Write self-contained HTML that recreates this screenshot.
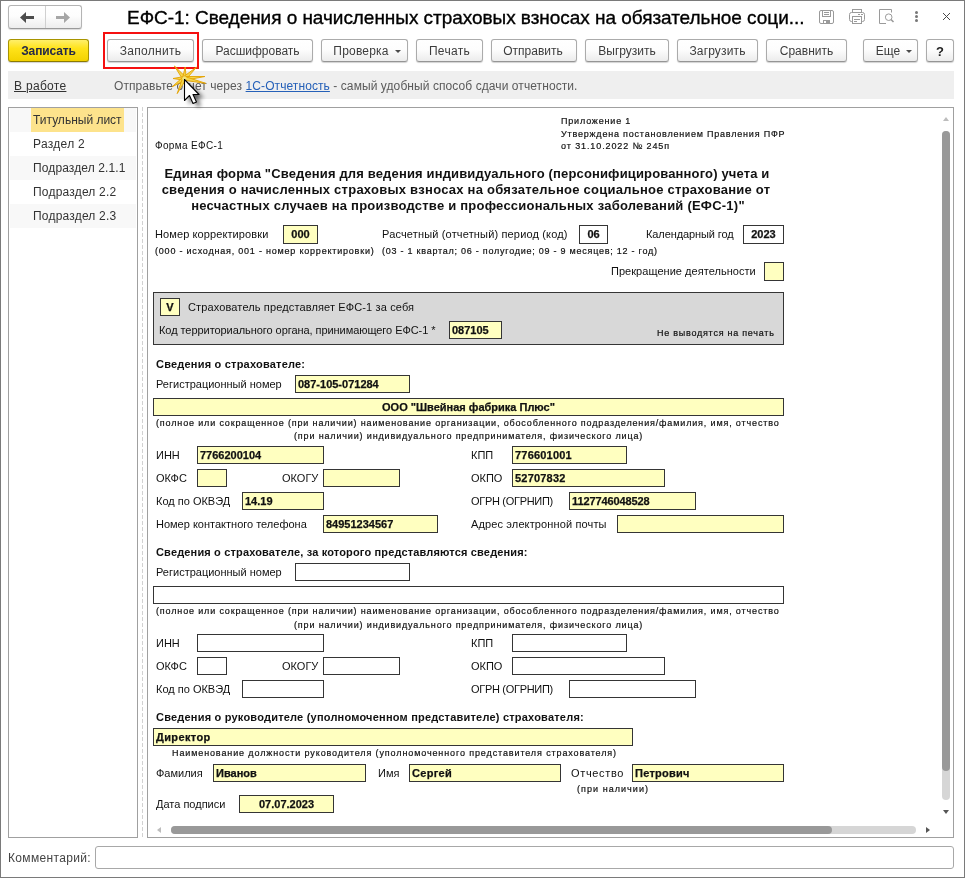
<!DOCTYPE html>
<html><head><meta charset="utf-8">
<style>
*{box-sizing:border-box;margin:0;padding:0}
html,body{width:965px;height:878px;overflow:hidden;background:#fff}
body{font-family:"Liberation Sans",sans-serif;position:relative;color:#333}
.a{position:absolute;white-space:pre;line-height:normal}
.win{position:absolute;left:0;top:0;width:965px;height:878px;border:1px solid #7a7a7a;border-right:1px solid #7a7a7a}
.btn{position:absolute;top:39px;height:23px;border:1px solid #ababab;border-bottom-color:#959595;border-radius:3px;background:linear-gradient(#fff 0,#fdfdfd 45%,#ececec 100%);box-shadow:0 1px 1px rgba(0,0,0,.18);font-size:12px;color:#3c3c3c;text-align:center;line-height:21px;padding-top:1px}
.tri{display:inline-block;width:0;height:0;border-left:3px solid transparent;border-right:3px solid transparent;border-top:3px solid #4a4a4a;vertical-align:2px;margin-left:6px}
.row{position:absolute;left:10px;width:126px;height:24px}
.row span{position:absolute;left:23px;top:5px;font-size:12px;color:#333;white-space:pre}
.doc{position:absolute;left:147px;top:107px;width:807px;height:731px;border:1px solid #a0a0a0;overflow:hidden;background:#fff}
.t11{font-size:11px;color:#222}
.b11{font-size:11px;font-weight:bold;color:#222}
.s9{font-size:9px;letter-spacing:.7px;color:#222}
.box{position:absolute;border:1px solid #333;background:#ffffc0;font-size:11px;font-weight:bold;color:#222;white-space:pre;padding-left:2px;line-height:15px}
.wbox{background:#fff}
</style></head><body><div id="wrap" style="will-change:transform;position:absolute;left:0;top:0;width:965px;height:878px;overflow:hidden">
<div class="win"></div>

<!-- nav buttons -->
<div style="position:absolute;left:8px;top:5px;width:74px;height:24px;border:1px solid #b4b4b4;border-bottom-color:#999;border-radius:3px;background:linear-gradient(#fff 0,#fdfdfd 45%,#ededed 100%);box-shadow:0 1px 1px rgba(0,0,0,.15)"></div>
<div style="position:absolute;left:45px;top:6px;width:1px;height:22px;background:#d0d0d0"></div>
<svg style="position:absolute;left:19px;top:11px" width="16" height="13" viewBox="0 0 16 13"><path d="M1 6.5 L7 1 L7 5 L15 5 L15 8 L7 8 L7 12 Z" fill="#4d4d4d"/></svg>
<svg style="position:absolute;left:55px;top:11px" width="16" height="13" viewBox="0 0 16 13"><path d="M15 6.5 L9 1 L9 5 L1 5 L1 8 L9 8 L9 12 Z" fill="#a6a6a6"/></svg>

<div class="a" style="left:127px;top:7px;font-size:19px;letter-spacing:-.045px;color:#000;-webkit-text-stroke:.35px #000">ЕФС-1: Сведения о начисленных страховых взносах на обязательное соци...</div>

<!-- title icons -->
<svg style="position:absolute;left:819px;top:10px" width="15" height="14" viewBox="0 0 15 14" fill="none" stroke="#9a9a9a" stroke-width="1"><rect x="0.5" y="0.5" width="14" height="13" rx="1.5"/><rect x="3.5" y="0.5" width="8" height="6"/><path d="M5 2.5 H10 M5 4.5 H10"/><rect x="4.5" y="10.5" width="6" height="3"/><rect x="7" y="11" width="3" height="2" fill="#9a9a9a" stroke="none"/></svg>
<svg style="position:absolute;left:849px;top:9px" width="16" height="15" viewBox="0 0 16 15" fill="none" stroke="#9a9a9a" stroke-width="1"><rect x="3.5" y="0.5" width="9" height="3"/><rect x="0.5" y="3.5" width="15" height="9" rx="2"/><rect x="3.5" y="7.5" width="9" height="7" fill="#fff"/><path d="M5 10.5 H11 M5 12.5 H8 M9 5.5 H11 M12 5.5 H14"/></svg>
<svg style="position:absolute;left:879px;top:9px" width="16" height="15" viewBox="0 0 16 15" fill="none" stroke="#9a9a9a" stroke-width="1"><path d="M7 14.5 H0.5 V0.5 H12.5 V3.5"/><circle cx="9.7" cy="8.2" r="3.3"/><path d="M12 10.5 L14.5 13" stroke-width="1.6"/></svg>
<div style="position:absolute;left:915px;top:11px;width:3px;height:3px;border-radius:50%;background:#777"></div>
<div style="position:absolute;left:915px;top:15px;width:3px;height:3px;border-radius:50%;background:#777"></div>
<div style="position:absolute;left:915px;top:19px;width:3px;height:3px;border-radius:50%;background:#777"></div>
<svg style="position:absolute;left:942px;top:12px" width="9" height="9" viewBox="0 0 9 9"><path d="M1 1 L8 8 M8 1 L1 8" stroke="#4a4a4a" stroke-width="1"/></svg>

<!-- toolbar -->
<div class="btn" style="left:8px;width:81px;border-color:#a89400;border-bottom-color:#8c7a00;background:linear-gradient(#ffef6a 0,#ffe31a 40%,#f3d200 100%);font-weight:bold;font-size:12px;letter-spacing:-.12px;color:#262a48">Записать</div>
<div class="btn" style="left:107px;width:87px;letter-spacing:.3px">Заполнить</div>
<div class="btn" style="left:202px;width:111px">Расшифровать</div>
<div class="btn" style="left:321px;width:87px;padding-left:5px;letter-spacing:.2px">Проверка<span class="tri"></span></div>
<div class="btn" style="left:416px;width:67px;letter-spacing:.3px">Печать</div>
<div class="btn" style="left:491px;width:86px;padding-right:2px">Отправить</div>
<div class="btn" style="left:585px;width:84px">Выгрузить</div>
<div class="btn" style="left:677px;width:81px;letter-spacing:.15px">Загрузить</div>
<div class="btn" style="left:766px;width:81px">Сравнить</div>
<div class="btn" style="left:863px;width:55px;padding-left:7px">Еще<span class="tri"></span></div>
<div class="btn" style="left:926px;width:28px;font-weight:bold;font-size:13px;color:#222">?</div>
<div style="position:absolute;left:103px;top:32px;width:96px;height:37px;border:2px solid #f51010"></div>

<!-- info bar -->
<div style="position:absolute;left:8px;top:71px;width:946px;height:28px;background:#efefef"></div>
<div class="a" style="left:14px;top:79px;font-size:12px;letter-spacing:.3px;color:#333;text-decoration:underline">В работе</div>
<div class="a" style="left:114px;top:79px;font-size:12px;letter-spacing:.08px;color:#5a5a5a">Отправьте отчет через <span style="color:#2560b8;text-decoration:underline">1С-Отчетность</span> - самый удобный способ сдачи отчетности.</div>

<!-- left panel -->
<div style="position:absolute;left:8px;top:107px;width:130px;height:731px;border:1px solid #a0a0a0;background:#fff"></div>
<div class="row" style="top:108px;background:#f8f8f8"><div style="position:absolute;left:21px;top:0;width:93px;height:24px;background:#fde38c"></div><span>Титульный лист</span></div>
<div class="row" style="top:132px"><span style="letter-spacing:.3px">Раздел 2</span></div>
<div class="row" style="top:156px;background:#f8f8f8"><span style="letter-spacing:.12px">Подраздел 2.1.1</span></div>
<div class="row" style="top:180px"><span style="letter-spacing:.2px">Подраздел 2.2</span></div>
<div class="row" style="top:204px;background:#f8f8f8"><span style="letter-spacing:.2px">Подраздел 2.3</span></div>

<!-- splitter -->
<div style="position:absolute;left:142px;top:107px;width:1px;height:731px;background:repeating-linear-gradient(#d2d2d2 0 4px,transparent 4px 6px)"></div>

<!-- document -->
<div class="a" style="left:561px;top:116px;font-size:9px;letter-spacing:0.82px;color:#111;-webkit-text-stroke:.2px #111">Приложение 1</div>
<div class="a" style="left:561px;top:129px;font-size:9px;letter-spacing:0.8px;color:#111;-webkit-text-stroke:.2px #111">Утверждена постановлением Правления ПФР</div>
<div class="a" style="left:561px;top:141px;font-size:9px;letter-spacing:0.9px;color:#111;-webkit-text-stroke:.2px #111">от 31.10.2022 № 245п</div>
<div class="a" style="left:155px;top:140px;font-size:10px;letter-spacing:0.35px;color:#111;">Форма ЕФС-1</div>
<div class="a" style="left:67px;width:800px;text-align:center;top:166px;font-size:13px;font-weight:bold;letter-spacing:0.15px;color:#111;">Единая форма "Сведения для ведения индивидуального (персонифицированного) учета и</div>
<div class="a" style="left:66px;width:800px;text-align:center;top:182px;font-size:13px;font-weight:bold;letter-spacing:0.245px;color:#111;">сведения о начисленных страховых взносах на обязательное социальное страхование от</div>
<div class="a" style="left:68px;width:800px;text-align:center;top:198px;font-size:13px;font-weight:bold;letter-spacing:0.23px;color:#111;">несчастных случаев на производстве и профессиональных заболеваний (ЕФС-1)"</div>
<div class="a" style="left:155px;top:228px;font-size:11px;letter-spacing:0.1px;color:#111;">Номер корректировки</div>
<div style="position:absolute;left:283px;top:225px;width:35px;height:19px;border:1px solid #353535;background:#ffffc0"></div>
<div class="a" style="left:-99.5px;width:800px;text-align:center;top:228px;font-size:11px;font-weight:bold;color:#111;-webkit-text-stroke:.25px #111">000</div>
<div class="a" style="left:155px;top:246px;font-size:9px;letter-spacing:0.79px;color:#111;-webkit-text-stroke:.2px #111">(000 - исходная, 001 - номер корректировки)</div>
<div class="a" style="left:382px;top:228px;font-size:11px;letter-spacing:0.16px;color:#111;">Расчетный (отчетный) период (код)</div>
<div style="position:absolute;left:579px;top:225px;width:29px;height:19px;border:1px solid #353535;background:#fff"></div>
<div class="a" style="left:193.5px;width:800px;text-align:center;top:228px;font-size:11px;font-weight:bold;color:#111;-webkit-text-stroke:.25px #111">06</div>
<div class="a" style="left:382px;top:246px;font-size:9px;letter-spacing:0.755px;color:#111;-webkit-text-stroke:.2px #111">(03 - 1 квартал; 06 - полугодие; 09 - 9 месяцев; 12 - год)</div>
<div class="a" style="left:646px;top:228px;font-size:11px;letter-spacing:-0.1px;color:#111;">Календарный год</div>
<div style="position:absolute;left:743px;top:225px;width:41px;height:19px;border:1px solid #353535;background:#fff"></div>
<div class="a" style="left:363.5px;width:800px;text-align:center;top:228px;font-size:11px;font-weight:bold;color:#111;-webkit-text-stroke:.25px #111">2023</div>
<div class="a" style="left:611px;top:265px;font-size:11px;letter-spacing:0.04px;color:#111;">Прекращение деятельности</div>
<div style="position:absolute;left:764px;top:262px;width:20px;height:19px;border:1px solid #353535;background:#ffffc0"></div>
<div style="position:absolute;left:153px;top:292px;width:631px;height:53px;border:1px solid #353535;background:#d8d8d8"></div>
<div style="position:absolute;left:160px;top:298px;width:20px;height:18px;border:1px solid #353535;background:#ffffc0"></div>
<div class="a" style="left:-230.0px;width:800px;text-align:center;top:301px;font-size:11px;font-weight:bold;color:#111;-webkit-text-stroke:.25px #111">V</div>
<div class="a" style="left:188px;top:301px;font-size:11px;letter-spacing:0.13px;color:#111;">Страхователь представляет ЕФС-1 за себя</div>
<div class="a" style="left:159px;top:324px;font-size:11px;letter-spacing:-0.06px;color:#111;">Код территориального органа, принимающего ЕФС-1 *</div>
<div style="position:absolute;left:449px;top:321px;width:53px;height:18px;border:1px solid #353535;background:#ffffc0"></div>
<div class="a" style="left:452px;top:324px;font-size:11px;font-weight:bold;color:#111;-webkit-text-stroke:.25px #111">087105</div>
<div class="a" style="left:657px;top:328px;font-size:9px;letter-spacing:0.75px;color:#111;-webkit-text-stroke:.2px #111">Не выводятся на печать</div>
<div class="a" style="left:156px;top:358px;font-size:11px;font-weight:bold;letter-spacing:0.21px;color:#111;">Сведения о страхователе:</div>
<div class="a" style="left:156px;top:378px;font-size:11px;color:#111;">Регистрационный номер</div>
<div style="position:absolute;left:295px;top:375px;width:115px;height:18px;border:1px solid #353535;background:#ffffc0"></div>
<div class="a" style="left:298px;top:378px;font-size:11px;font-weight:bold;color:#111;-webkit-text-stroke:.25px #111">087-105-071284</div>
<div style="position:absolute;left:153px;top:398px;width:631px;height:18px;border:1px solid #353535;background:#ffffc0"></div>
<div class="a" style="left:68.5px;width:800px;text-align:center;top:401px;font-size:11px;font-weight:bold;color:#111;-webkit-text-stroke:.25px #111">ООО "Швейная фабрика Плюс"</div>
<div class="a" style="left:156px;top:418px;font-size:9px;letter-spacing:0.85px;color:#111;-webkit-text-stroke:.2px #111">(полное или сокращенное (при наличии) наименование организации, обособленного подразделения/фамилия, имя, отчество</div>
<div class="a" style="left:294px;top:431px;font-size:9px;letter-spacing:0.85px;color:#111;-webkit-text-stroke:.2px #111">(при наличии) индивидуального предпринимателя, физического лица)</div>
<div class="a" style="left:156px;top:449px;font-size:11px;color:#111;">ИНН</div>
<div style="position:absolute;left:197px;top:446px;width:127px;height:18px;border:1px solid #353535;background:#ffffc0"></div>
<div class="a" style="left:200px;top:449px;font-size:11px;font-weight:bold;color:#111;-webkit-text-stroke:.25px #111">7766200104</div>
<div class="a" style="left:471px;top:449px;font-size:11px;color:#111;">КПП</div>
<div style="position:absolute;left:512px;top:446px;width:115px;height:18px;border:1px solid #353535;background:#ffffc0"></div>
<div class="a" style="left:515px;top:449px;font-size:11px;font-weight:bold;letter-spacing:0.2px;color:#111;-webkit-text-stroke:.25px #111">776601001</div>
<div class="a" style="left:156px;top:472px;font-size:11px;color:#111;">ОКФС</div>
<div style="position:absolute;left:197px;top:469px;width:30px;height:18px;border:1px solid #353535;background:#ffffc0"></div>
<div class="a" style="left:282px;top:472px;font-size:11px;color:#111;">ОКОГУ</div>
<div style="position:absolute;left:323px;top:469px;width:77px;height:18px;border:1px solid #353535;background:#ffffc0"></div>
<div class="a" style="left:471px;top:472px;font-size:11px;color:#111;">ОКПО</div>
<div style="position:absolute;left:512px;top:469px;width:153px;height:18px;border:1px solid #353535;background:#ffffc0"></div>
<div class="a" style="left:515px;top:472px;font-size:11px;font-weight:bold;letter-spacing:0.2px;color:#111;-webkit-text-stroke:.25px #111">52707832</div>
<div class="a" style="left:156px;top:495px;font-size:11px;color:#111;">Код по ОКВЭД</div>
<div style="position:absolute;left:242px;top:492px;width:82px;height:18px;border:1px solid #353535;background:#ffffc0"></div>
<div class="a" style="left:245px;top:495px;font-size:11px;font-weight:bold;color:#111;-webkit-text-stroke:.25px #111">14.19</div>
<div class="a" style="left:471px;top:495px;font-size:11px;letter-spacing:-0.3px;color:#111;">ОГРН (ОГРНИП)</div>
<div style="position:absolute;left:569px;top:492px;width:127px;height:18px;border:1px solid #353535;background:#ffffc0"></div>
<div class="a" style="left:572px;top:495px;font-size:11px;font-weight:bold;letter-spacing:-0.1px;color:#111;-webkit-text-stroke:.25px #111">1127746048528</div>
<div class="a" style="left:156px;top:518px;font-size:11px;color:#111;">Номер контактного телефона</div>
<div style="position:absolute;left:323px;top:515px;width:115px;height:18px;border:1px solid #353535;background:#ffffc0"></div>
<div class="a" style="left:326px;top:518px;font-size:11px;font-weight:bold;color:#111;-webkit-text-stroke:.25px #111">84951234567</div>
<div class="a" style="left:471px;top:518px;font-size:11px;letter-spacing:0.13px;color:#111;">Адрес электронной почты</div>
<div style="position:absolute;left:617px;top:515px;width:167px;height:18px;border:1px solid #353535;background:#ffffc0"></div>
<div class="a" style="left:156px;top:546px;font-size:11px;font-weight:bold;letter-spacing:0.16px;color:#111;">Сведения о страхователе, за которого представляются сведения:</div>
<div class="a" style="left:156px;top:566px;font-size:11px;color:#111;">Регистрационный номер</div>
<div style="position:absolute;left:295px;top:563px;width:115px;height:18px;border:1px solid #353535;background:#fff"></div>
<div style="position:absolute;left:153px;top:586px;width:631px;height:18px;border:1px solid #353535;background:#fff"></div>
<div class="a" style="left:156px;top:606px;font-size:9px;letter-spacing:0.85px;color:#111;-webkit-text-stroke:.2px #111">(полное или сокращенное (при наличии) наименование организации, обособленного подразделения/фамилия, имя, отчество</div>
<div class="a" style="left:294px;top:620px;font-size:9px;letter-spacing:0.85px;color:#111;-webkit-text-stroke:.2px #111">(при наличии) индивидуального предпринимателя, физического лица)</div>
<div class="a" style="left:156px;top:637px;font-size:11px;color:#111;">ИНН</div>
<div style="position:absolute;left:197px;top:634px;width:127px;height:18px;border:1px solid #353535;background:#fff"></div>
<div class="a" style="left:471px;top:637px;font-size:11px;color:#111;">КПП</div>
<div style="position:absolute;left:512px;top:634px;width:115px;height:18px;border:1px solid #353535;background:#fff"></div>
<div class="a" style="left:156px;top:660px;font-size:11px;color:#111;">ОКФС</div>
<div style="position:absolute;left:197px;top:657px;width:30px;height:18px;border:1px solid #353535;background:#fff"></div>
<div class="a" style="left:282px;top:660px;font-size:11px;color:#111;">ОКОГУ</div>
<div style="position:absolute;left:323px;top:657px;width:77px;height:18px;border:1px solid #353535;background:#fff"></div>
<div class="a" style="left:471px;top:660px;font-size:11px;color:#111;">ОКПО</div>
<div style="position:absolute;left:512px;top:657px;width:153px;height:18px;border:1px solid #353535;background:#fff"></div>
<div class="a" style="left:156px;top:683px;font-size:11px;color:#111;">Код по ОКВЭД</div>
<div style="position:absolute;left:242px;top:680px;width:82px;height:18px;border:1px solid #353535;background:#fff"></div>
<div class="a" style="left:471px;top:683px;font-size:11px;letter-spacing:-0.3px;color:#111;">ОГРН (ОГРНИП)</div>
<div style="position:absolute;left:569px;top:680px;width:127px;height:18px;border:1px solid #353535;background:#fff"></div>
<div class="a" style="left:156px;top:711px;font-size:11px;font-weight:bold;letter-spacing:0.21px;color:#111;">Сведения о руководителе (уполномоченном представителе) страхователя:</div>
<div style="position:absolute;left:153px;top:728px;width:480px;height:18px;border:1px solid #353535;background:#ffffc0"></div>
<div class="a" style="left:156px;top:731px;font-size:11px;font-weight:bold;letter-spacing:0.38px;color:#111;-webkit-text-stroke:.25px #111">Директор</div>
<div class="a" style="left:172px;top:748px;font-size:9px;letter-spacing:0.88px;color:#111;-webkit-text-stroke:.2px #111">Наименование должности руководителя (уполномоченного представителя страхователя)</div>
<div class="a" style="left:156px;top:767px;font-size:11px;color:#111;">Фамилия</div>
<div style="position:absolute;left:213px;top:764px;width:153px;height:18px;border:1px solid #353535;background:#ffffc0"></div>
<div class="a" style="left:216px;top:767px;font-size:11px;font-weight:bold;color:#111;-webkit-text-stroke:.25px #111">Иванов</div>
<div class="a" style="left:378px;top:767px;font-size:11px;color:#111;">Имя</div>
<div style="position:absolute;left:409px;top:764px;width:152px;height:18px;border:1px solid #353535;background:#ffffc0"></div>
<div class="a" style="left:412px;top:767px;font-size:11px;font-weight:bold;letter-spacing:0.3px;color:#111;-webkit-text-stroke:.25px #111">Сергей</div>
<div class="a" style="left:571px;top:767px;font-size:11px;letter-spacing:0.65px;color:#111;">Отчество</div>
<div style="position:absolute;left:632px;top:764px;width:152px;height:18px;border:1px solid #353535;background:#ffffc0"></div>
<div class="a" style="left:635px;top:767px;font-size:11px;font-weight:bold;letter-spacing:0.25px;color:#111;-webkit-text-stroke:.25px #111">Петрович</div>
<div class="a" style="left:577px;top:784px;font-size:9px;letter-spacing:1.05px;color:#111;-webkit-text-stroke:.2px #111">(при наличии)</div>
<div class="a" style="left:156px;top:798px;font-size:11px;color:#111;">Дата подписи</div>
<div style="position:absolute;left:239px;top:795px;width:95px;height:18px;border:1px solid #353535;background:#ffffc0"></div>
<div class="a" style="left:-113.5px;width:800px;text-align:center;top:798px;font-size:11px;font-weight:bold;color:#111;-webkit-text-stroke:.25px #111">07.07.2023</div>
<!-- document frame -->
<div style="position:absolute;left:147px;top:107px;width:807px;height:731px;border:1px solid #a0a0a0"></div>
<!-- v scroll -->
<svg style="position:absolute;left:942px;top:116px" width="8" height="6" viewBox="0 0 8 6"><path d="M1 5 L4 1 L7 5 Z" fill="#bdbdbd"/></svg>
<div style="position:absolute;left:942px;top:131px;width:8px;height:669px;border-radius:4px;background:#d6d6d6"></div>
<div style="position:absolute;left:942px;top:131px;width:8px;height:640px;border-radius:4px;background:#999"></div>
<svg style="position:absolute;left:942px;top:809px" width="8" height="6" viewBox="0 0 8 6"><path d="M1 1 L7 1 L4 5 Z" fill="#555"/></svg>
<!-- h scroll -->
<svg style="position:absolute;left:156px;top:826px" width="6" height="8" viewBox="0 0 6 8"><path d="M5 1 L5 7 L1 4 Z" fill="#bdbdbd"/></svg>
<div style="position:absolute;left:171px;top:826px;width:745px;height:8px;border-radius:4px;background:#d6d6d6"></div>
<div style="position:absolute;left:171px;top:826px;width:661px;height:8px;border-radius:4px;background:#999"></div>
<svg style="position:absolute;left:925px;top:826px" width="6" height="8" viewBox="0 0 6 8"><path d="M1 1 L5 4 L1 7 Z" fill="#555"/></svg>
<!-- comment -->
<div class="a" style="left:8px;top:851px;font-size:12px;letter-spacing:.33px;color:#444">Комментарий:</div>
<div style="position:absolute;left:95px;top:846px;width:859px;height:23px;border:1px solid #a8a8a8;border-radius:3px;background:#fff"></div>


<!-- cursor sparkle -->
<svg style="position:absolute;left:165px;top:60px" width="50" height="50" viewBox="0 0 50 50">
<defs><filter id="bl" x="-50%" y="-50%" width="200%" height="200%"><feGaussianBlur stdDeviation="2.2"/></filter></defs>
<g fill="#f5d64a" stroke="#e3a200" stroke-width="0.9" stroke-linejoin="round">
<polygon points="20.9,17.2 9.4,6.0 17.9,19.6"/>
<polygon points="21.3,18.5 20.2,7.1 17.5,18.3"/>
<polygon points="20.7,19.8 31.6,7.1 18.1,17.0"/>
<polygon points="19.6,20.3 39.9,16.5 19.2,16.5"/>
<polygon points="19.0,20.3 40.7,23.3 19.8,16.5"/>
<polygon points="19.4,16.5 8.0,18.5 19.4,20.3"/>
<polygon points="18.3,16.8 7.1,26.8 20.5,20.0"/>
<polygon points="17.7,17.6 12.2,33.6 21.1,19.2"/>
</g>
<circle cx="19.4" cy="18.4" r="2.2" fill="#f0e27a"/>
<path d="M21 21 L21 42 L26 37 L29.5 44.5 L33 43 L29.5 35.5 L36 35.5 Z" fill="#000" opacity="0.6" filter="url(#bl)" transform="translate(3,2.5)"/>
<path d="M19.5 19.5 L19.5 40.5 L24.5 35.5 L28 43.5 L31.5 42 L28 34.5 L34 34.5 Z" fill="#fff" stroke="#000" stroke-width="1.1" stroke-linejoin="round"/>
</svg>
</div></body></html>
